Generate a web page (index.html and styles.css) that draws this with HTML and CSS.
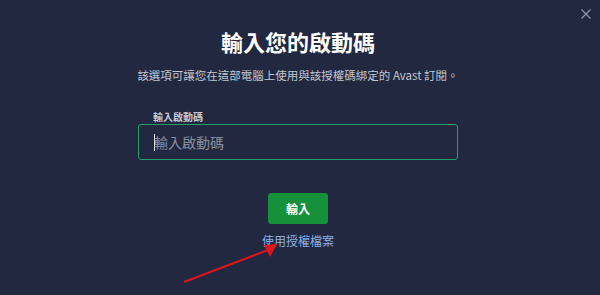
FILE: index.html
```html
<!DOCTYPE html>
<html lang="zh-Hant">
<head>
<meta charset="utf-8">
<link rel="stylesheet" href="styles.css">
</head>
<body>
<div class="dialog">
  <button class="close" aria-label="關閉">
    <svg width="10" height="10" viewBox="0 0 10 10"><path d="M0.5 0.5L9.5 9.5M9.5 0.5L0.5 9.5" stroke="#9096ad" stroke-width="1.2" fill="none"/></svg>
  </button>
  <h1 class="title">輸入您的啟動碼</h1>
  <p class="subtitle">該選項可讓您在這部電腦上使用與該授權碼綁定的 Avast 訂閱。</p>
  <div class="field">
    <div class="label">輸入啟動碼</div>
    <div class="input"><span class="caret"></span><span class="placeholder">輸入啟動碼</span></div>
  </div>
  <button class="submit">輸入</button>
  <a class="link" href="#">使用授權檔案</a>
  <svg class="arrow" width="600" height="295" viewBox="0 0 600 295">
    <line x1="184" y1="282" x2="268" y2="250" stroke="#e0141e" stroke-width="2"/>
    <polygon points="277,244 264,245 270,257" fill="#e0141e"/>
  </svg>
</div>
</body>
</html>
```

FILE: styles.css
```css
html, body {
  margin: 0;
  padding: 0;
  background: #212840;
  width: 600px;
  height: 295px;
  overflow: hidden;
  font-family: "Noto Sans CJK TC", "Noto Sans", sans-serif;
}
.dialog {
  position: relative;
  width: 600px;
  height: 295px;
  display: flex;
  flex-direction: column;
  align-items: center;
  box-sizing: border-box;
  padding-top: 26px;
  padding-right: 4px;
}
.close {
  position: absolute;
  top: 9px;
  right: 9px;
  background: none;
  border: 0;
  padding: 0;
  width: 10px;
  height: 10px;
  display: flex;
}
.title {
  margin: 0;
  font-size: 22px;
  line-height: 30px;
  font-weight: 700;
  color: #ffffff;
}
.subtitle {
  margin: 10px 0 0;
  font-size: 11.5px;
  line-height: 18px;
  color: #c3c7d2;
}
.field {
  margin-top: 26px;
  width: 320px;
  display: flex;
  flex-direction: column;
}
.label {
  padding-left: 15px;
  font-size: 10px;
  line-height: 14px;
  font-weight: 700;
  color: #c4c8d4;
}
.input {
  height: 36px;
  box-sizing: border-box;
  border: 1px solid #21a06a;
  border-radius: 3px;
  display: flex;
  align-items: center;
  padding-left: 15px;
}
.caret {
  width: 1px;
  height: 17px;
  background: #e8eaf0;
  margin-right: -1px;
}
.placeholder {
  font-size: 14px;
  color: #8a8f9f;
}
.submit {
  margin-top: 33px;
  width: 60px;
  height: 31px;
  border: 0;
  border-radius: 3px;
  background: #17903b;
  color: #ffffff;
  font-family: inherit;
  font-size: 12px;
  font-weight: 700;
  padding: 0;
}
.link {
  margin-top: 9px;
  font-size: 12px;
  line-height: 16px;
  color: #8fb2e6;
  text-decoration: none;
}
.arrow {
  position: absolute;
  left: 0;
  top: 0;
  pointer-events: none;
}
```
